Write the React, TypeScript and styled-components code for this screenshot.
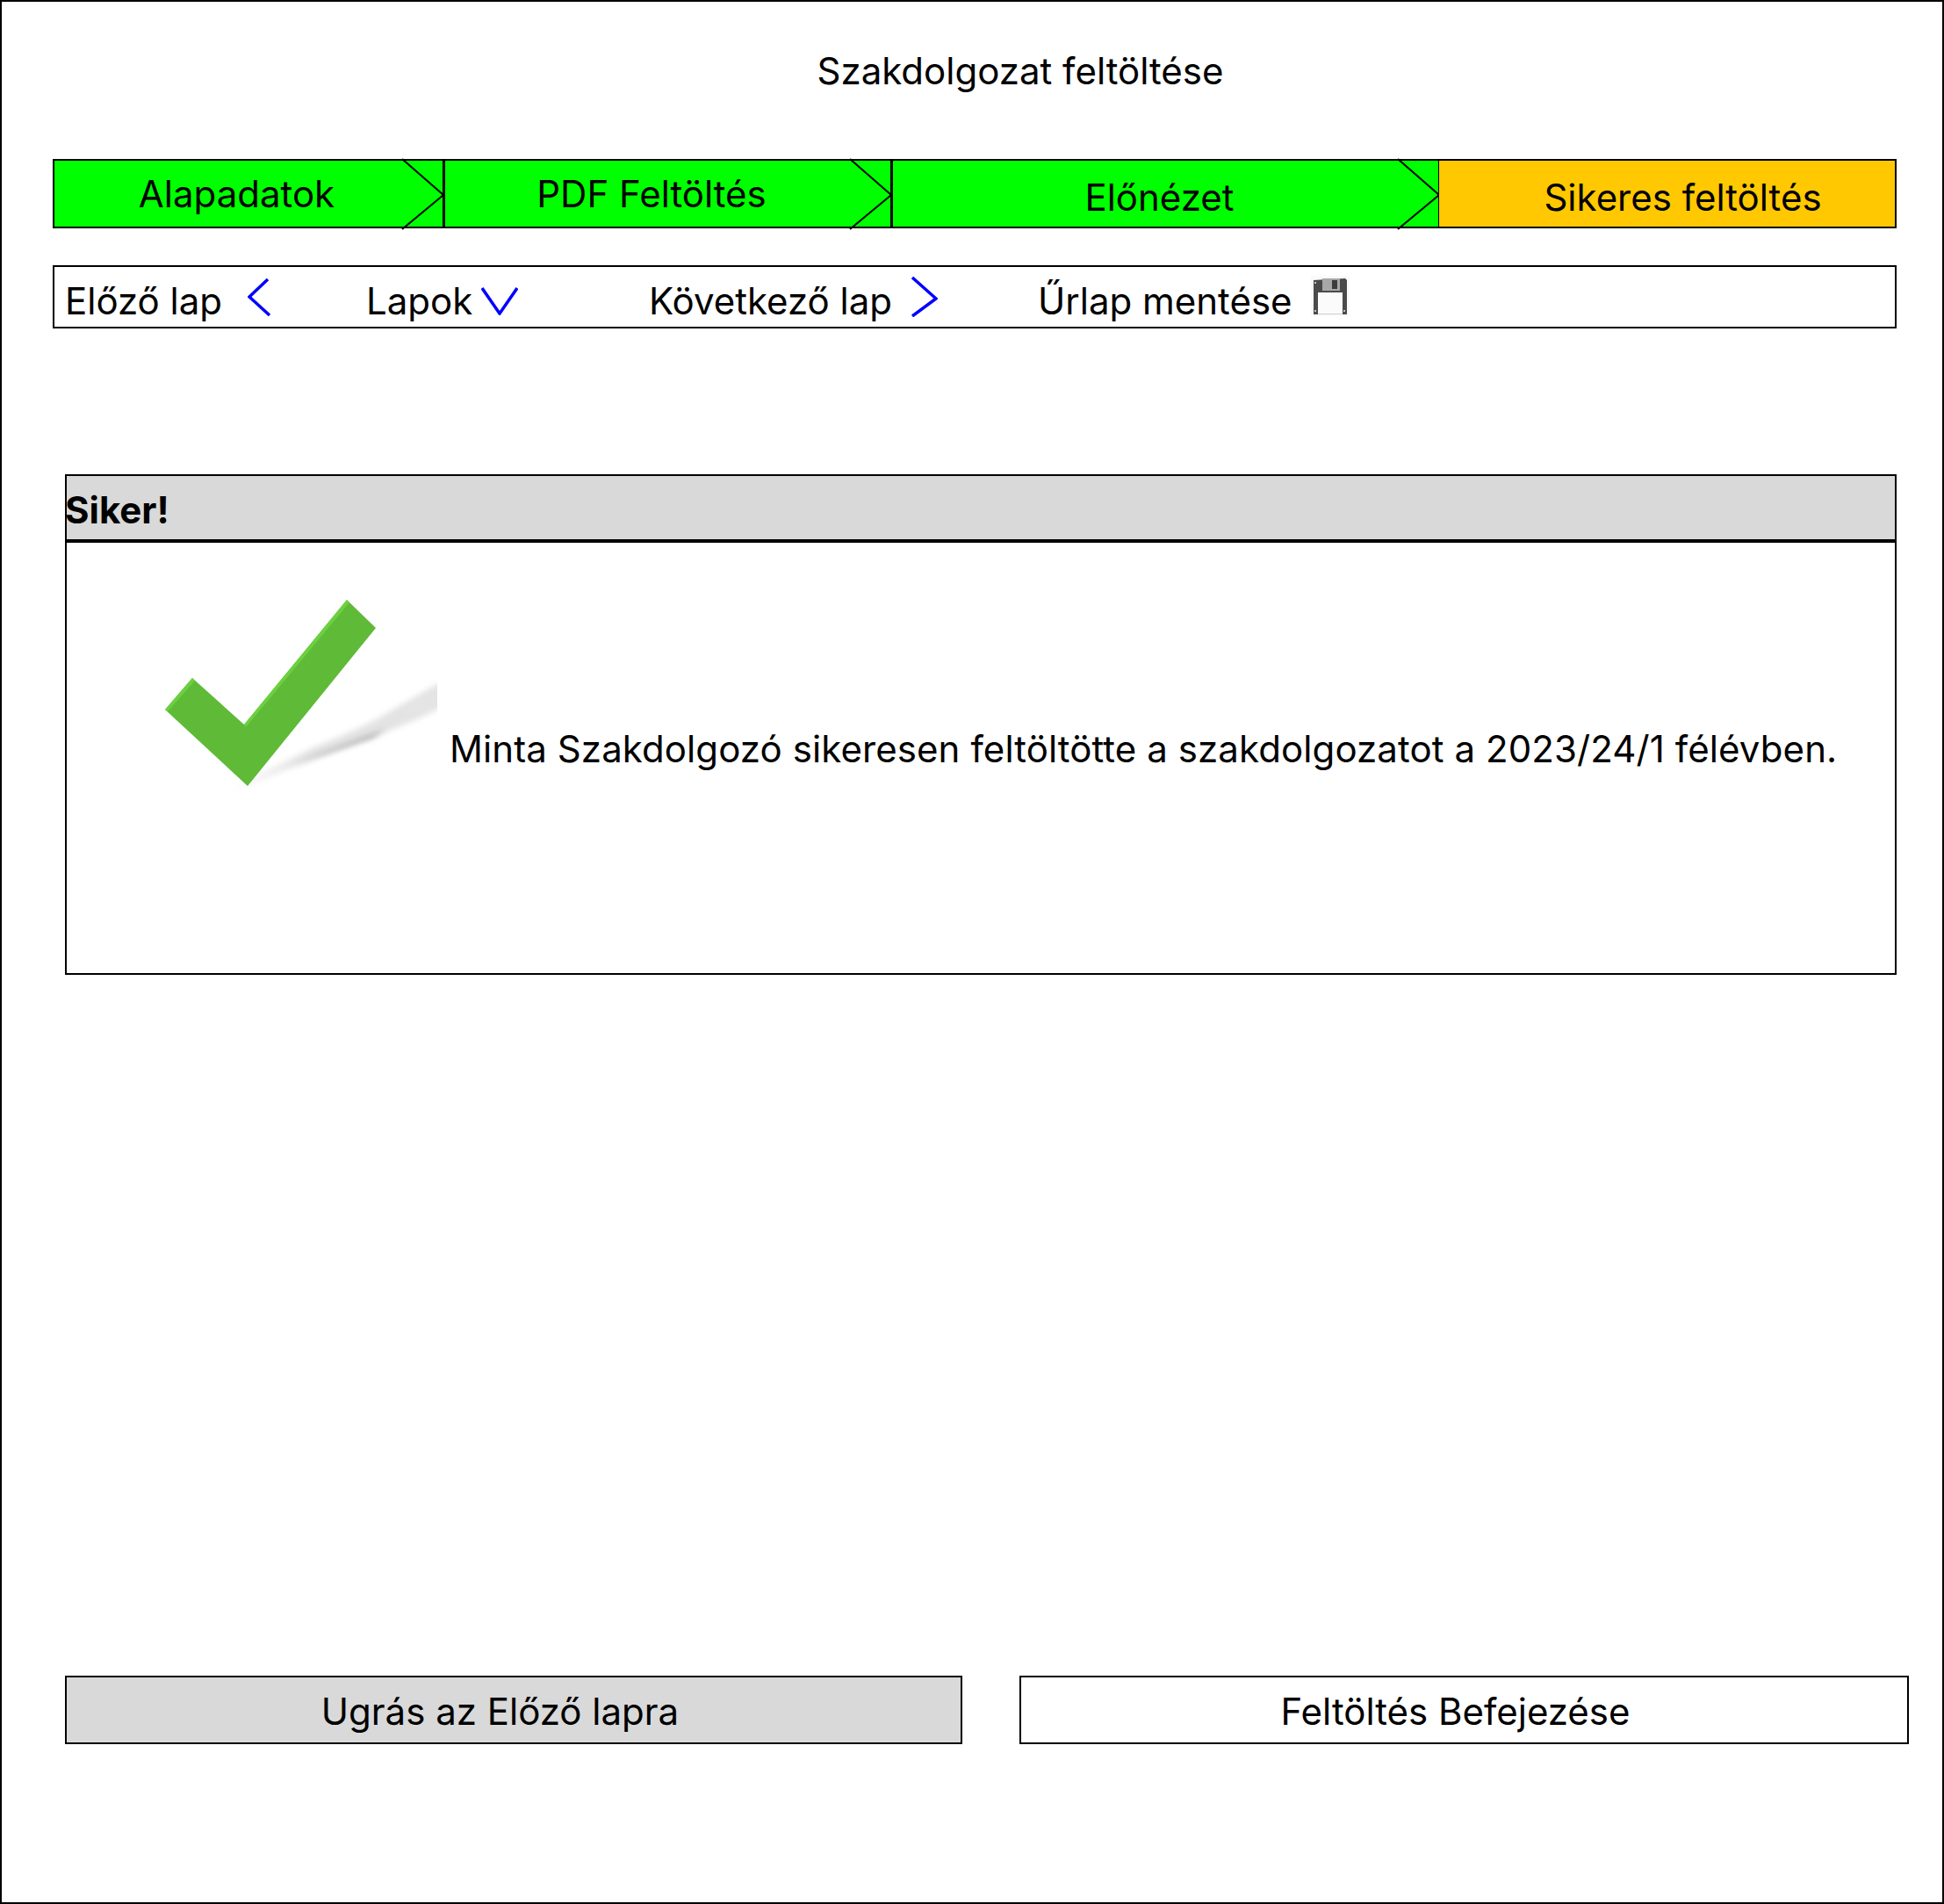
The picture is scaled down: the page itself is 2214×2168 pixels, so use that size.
import React from "react";
import styled, { createGlobalStyle } from "styled-components";

const Global = createGlobalStyle`
  html, body { margin: 0; padding: 0; background: #fff; }
  * { box-sizing: border-box; }
`;

const Page = styled.div`
  width: 2214px;
  height: 2168px;
  border: 2px solid #000;
  background: #fff;
  color: #000;
  font-family: Inter, "Liberation Sans", sans-serif;
  font-size: 42px;
  line-height: 50px;
  padding: 0 38px 0 58px;
  display: flex;
  flex-direction: column;
  overflow: hidden;
`;

const Title = styled.h1`
  margin: 54px 0 0;
  height: 50px;
  width: 2100px;
  padding-left: 104px;
  font-size: 42px;
  font-weight: 400;
  line-height: 50px;
  text-align: center;
`;

const Stepper = styled.div`
  margin-top: 75px;
  width: 2100px;
  height: 79px;
  display: flex;
  border: 2px solid #000;
`;

const Step = styled.div<{ $w: number; $bg: string; $drop: number; $right: number; $left?: number; $divider: number }>`
  position: relative;
  width: ${(p) => p.$w}px;
  flex: none;
  background: ${(p) => p.$bg};
  border-right: ${(p) => p.$divider}px solid #000;
  display: flex;
  align-items: center;
  justify-content: center;
  padding: ${(p) => p.$drop}px ${(p) => p.$right}px 0 ${(p) => p.$left ?? 0}px;
`;

const Chevron = styled.svg`
  position: absolute;
  top: -2px;
  right: -2px;
  overflow: visible;
`;

const Toolbar = styled.div`
  margin-top: 42px;
  width: 2100px;
  height: 72px;
  border: 2px solid #000;
  padding: 0 0 0 12px;
  display: grid;
  grid-template-columns: 343px 322px 443px 1fr;
`;

const ToolItem = styled.div<{ $gap: number }>`
  display: flex;
  align-items: center;
  gap: ${(p) => p.$gap}px;
  padding-top: 9px;
`;

const NavIcon = styled.svg<{ $lift: number }>`
  display: block;
  flex: none;
  margin-top: ${(p) => p.$lift}px;
`;

const SaveIcon = styled.svg`
  display: block;
  flex: none;
  margin-top: -11px;
`;

const Panel = styled.section`
  margin: 166px 0 0 14px;
  width: 2086px;
  height: 570px;
  border: 2px solid #000;
  display: flex;
  flex-direction: column;
`;

const PanelHeader = styled.div`
  height: 76px;
  background: #d9d9d9;
  border-bottom: 4px solid #000;
  font-weight: 700;
  display: flex;
  align-items: center;
  padding-top: 6px;
`;

const HeaderLabel = styled.span`
  margin-left: -2px;
`;

const PanelBody = styled.div`
  flex: 1;
  display: flex;
  align-items: flex-start;
  padding: 44px 0 0 70px;
`;

const CheckArt = styled.svg`
  display: block;
  flex: none;
`;

const Message = styled.p`
  margin: 166px 0 0 14px;
  white-space: nowrap;
  letter-spacing: 0.09px;
`;

const Actions = styled.div`
  margin: 798px 0 0 14px;
  display: flex;
  gap: 65px;
`;

const ActionButton = styled.button<{ $w: number; $bg: string; $right: number }>`
  width: ${(p) => p.$w}px;
  height: 78px;
  background: ${(p) => p.$bg};
  border: 2px solid #000;
  border-radius: 0;
  padding: 4px ${(p) => p.$right}px 0 0;
  color: #000;
  font: inherit;
  text-align: center;
`;

const ChevronMark = () => (
  <Chevron width="48" height="81" viewBox="0 0 48 81">
    <path d="M0 0 L47 41 L0 80" fill="none" stroke="#000" strokeWidth="2" />
  </Chevron>
);

export default function App() {
  return (
    <Page>
      <Global />
      <Title>Szakdolgozat feltöltése</Title>
      <Stepper>
        <Step $w={445} $bg="#00ff00" $drop={0} $right={27} $divider={3}>
          Alapadatok
          <ChevronMark />
        </Step>
        <Step $w={510} $bg="#00ff00" $drop={0} $right={37} $divider={3}>
          PDF Feltöltés
          <ChevronMark />
        </Step>
        <Step $w={622} $bg="#00ff00" $drop={8} $right={14} $divider={1}>
          Előnézet
          <ChevronMark />
        </Step>
        <Step $w={519} $bg="#ffc800" $drop={8} $right={0} $left={36} $divider={0}>
          Sikeres feltöltés
        </Step>
      </Stepper>
      <Toolbar>
        <ToolItem $gap={29}>
          Előző lap
          <NavIcon $lift={-9} width="27" height="43" viewBox="0 0 27 43">
            <path d="M23 1 L2 21 L25 42" fill="none" stroke="#0000ff" strokeWidth="3.5" />
          </NavIcon>
        </ToolItem>
        <ToolItem $gap={10}>
          Lapok
          <NavIcon $lift={0} width="42" height="32" viewBox="0 0 42 32">
            <path d="M1 1 L21 30 L41 1" fill="none" stroke="#0000ff" strokeWidth="3.5" />
          </NavIcon>
        </ToolItem>
        <ToolItem $gap={21}>
          Következő lap
          <NavIcon $lift={-9} width="31" height="46" viewBox="0 0 31 46">
            <path d="M2 1 L29 25 L2 45" fill="none" stroke="#0000ff" strokeWidth="3.5" />
          </NavIcon>
        </ToolItem>
        <ToolItem $gap={21}>
          Űrlap mentése
          <SaveIcon width="44" height="46" viewBox="0 0 44 46">
            <rect width="44" height="46" fill="#fafafa" />
            <path d="M3 5 L39 3 L41 5 V44 H3 Z" fill="#4a4a4a" />
            <rect x="13" y="3" width="20" height="14" fill="#a8a8a8" />
            <rect x="24" y="5" width="6" height="10" fill="#3c3c3c" />
            <rect x="8" y="19" width="28" height="25" fill="#fbfbfb" />
            <rect x="8" y="43" width="28" height="1" fill="#cfcfcf" />
            <rect x="4" y="7" width="2" height="2" fill="#c8c8c8" />
            <rect x="4" y="39" width="2" height="2" fill="#c8c8c8" />
            <rect x="37" y="39" width="2" height="2" fill="#c8c8c8" />
          </SaveIcon>
        </ToolItem>
      </Toolbar>
      <Panel>
        <PanelHeader>
          <HeaderLabel>Siker!</HeaderLabel>
        </PanelHeader>
        <PanelBody>
          <CheckArt width="352" height="250" viewBox="146 662 352 250">
            <defs>
              <filter id="soft" x="-10%" y="-30%" width="120%" height="160%">
                <feGaussianBlur stdDeviation="3" />
              </filter>
              <filter id="edge" x="-5%" y="-5%" width="110%" height="110%">
                <feGaussianBlur stdDeviation="0.6" />
              </filter>
              <linearGradient id="fade" x1="0" y1="0" x2="1" y2="0">
                <stop offset="0" stopColor="#ffffff" />
                <stop offset="0.4" stopColor="#e2e2e2" />
                <stop offset="1" stopColor="#e4e4e4" />
              </linearGradient>
            </defs>
            <path d="M250 908 Q360 862 443 832 Q475 820 510 802 V772 Q460 800 427 820 Q390 838 360 850 Q310 872 250 908 Z" fill="url(#fade)" filter="url(#soft)" />
            <path d="M330 872 Q390 848 440 830 L425 840 Q385 854 330 872 Z" fill="#a8a8a8" filter="url(#soft)" />
            <g filter="url(#edge)">
              <path d="M395 683 L428 715 L282 895 L188 808 L219 772 L278 825 Z" fill="#5fba37" />
              <path d="M395 683 L398 686 L280 828 L278 825 Z M219 772 L188 808 L191 810 L222 775 Z" fill="#6cd040" />
            </g>
          </CheckArt>
          <Message>Minta Szakdolgozó sikeresen feltöltötte a szakdolgozatot a 2023/24/1 félévben.</Message>
        </PanelBody>
      </Panel>
      <Actions>
        <ActionButton $w={1022} $bg="#d9d9d9" $right={31}>Ugrás az Előző lapra</ActionButton>
        <ActionButton $w={1013} $bg="#ffffff" $right={20}>Feltöltés Befejezése</ActionButton>
      </Actions>
    </Page>
  );
}
